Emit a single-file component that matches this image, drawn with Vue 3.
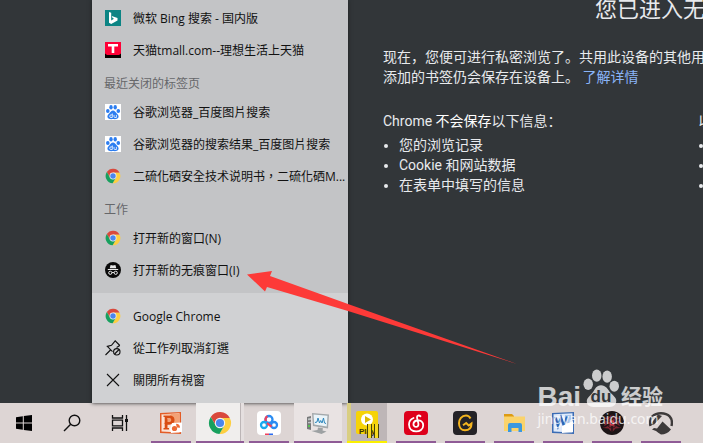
<template>
  <div class="desktop">
    <!-- 圖示 -->
    <svg class="sprite" aria-hidden="true">
      <symbol id="chrome" viewBox="0 0 24 24">
        <path fill="#d9493c" d="M12 12V7h9.8A11 11 0 0 0 2.77 6l4.9 8.5z" />
        <path fill="#fdcf41" d="M21.8 7H12v5l4.33 2.5-4.9 8.5A11 11 0 0 0 21.8 7z" />
        <path fill="#17a05e" d="M2.77 6l4.9 8.5L12 12l4.33 2.5-4.9 8.5A11 11 0 0 1 2.77 6z" />
        <circle cx="12" cy="12" r="5.2" fill="#f5f5f5" />
        <circle cx="12" cy="12" r="4.1" fill="#4a86ee" />
      </symbol>
      <symbol id="bing" viewBox="0 0 16 16">
        <path fill="#0c8484" d="M0 0h16v16H0z" />
        <path fill="#fff" d="M4 2l2.2.8v7.6l2.8-1.6-1.4-.7-.9-2.2 5.8 2v2.5L6.2 14 4 12.8z" />
      </symbol>
      <symbol id="tmall" viewBox="0 0 16 16">
        <path fill="#ff0036" d="M0 0h16v16H0z" />
        <path fill="#0b0000" d="M0 11.5l2 1.6h12l2-1.6V16H0z" />
        <path fill="#fff" d="M3 2h10v2.4H9.3V11H6.7V4.4H3z" />
      </symbol>
      <symbol id="baidu" viewBox="0 0 16 16">
        <path fill="#fff" d="M0 0h16v16H0z" />
        <g fill="#2c7df0">
          <ellipse cx="2.8" cy="7" rx="1.8" ry="2.1" />
          <ellipse cx="6" cy="3.2" rx="1.7" ry="2.2" />
          <ellipse cx="10.2" cy="3.2" rx="1.7" ry="2.2" />
          <ellipse cx="13.3" cy="7" rx="1.8" ry="2.1" />
          <path d="M8 6.6c1.7 0 2.4 1.6 3.6 2.7 1.4 1.2 2.4 2.500 1.800 4.200-.8 2-3.300 1.600-5.400 1.600s-4.600.4-5.400-1.600c-.6-1.700.4-3 1.800-4.200C5.600 8.200 6.300 6.600 8 6.600z" />
        </g>
        <path fill="none" stroke="#fff" stroke-width=".8" d="M7.300 9.500v4H6a1.300 1.300 0 0 1 0-2.600h1.300M9 10.900v1.600q0 1 1 1h1.400v-2.600" />
      </symbol>
      <symbol id="incognito" viewBox="0 0 16 16">
        <circle cx="8" cy="8" r="8" fill="#0a0a0a" />
        <path fill="#e8e8e8" d="M5.600 3l2.400.5 2.400-.5.9 3.300H4.700zM2.800 7h10.400v1H2.800z" />
        <path fill="none" stroke="#e8e8e8" d="M7 10.600q1-.6 2 0" />
        <circle cx="5.300" cy="10.800" r="1.600" fill="none" stroke="#e8e8e8" />
        <circle cx="10.700" cy="10.800" r="1.600" fill="none" stroke="#e8e8e8" />
      </symbol>
      <symbol id="unpin" viewBox="0 0 16 16">
        <g fill="none" stroke="#111" stroke-width="1.100">
          <path d="M.5 15l5-5M14.800 5.500L10.200.8 6.500 5.300 2.300 6.400l5.200 5.200M14.800 5.500l-3.200 2" />
          <circle cx="11.800" cy="11.800" r="3.200" />
          <path d="M9.600 14l4.500-4.500" />
        </g>
      </symbol>
      <symbol id="close" viewBox="0 0 16 16">
        <path fill="none" stroke="#111" stroke-width="1.100" d="M2 2l12 12M14 2L2 14" />
      </symbol>
      <symbol id="windows" viewBox="0 0 24 24">
        <path d="M4 6.300l6.800-1v6.200H4zM11.800 5.100L20 4v7.500h-8.200zM4 12.500h6.800v6.200l-6.800-1zM11.800 12.500H20V20l-8.200-1.100z" />
      </symbol>
      <symbol id="search" viewBox="0 0 24 24">
        <g fill="none" stroke="#111" stroke-width="1.400">
          <circle cx="14.500" cy="9.500" r="5.300" />
          <path d="M10.700 13.300L4 20" />
        </g>
      </symbol>
      <symbol id="taskview" viewBox="0 0 24 24">
        <path fill="none" stroke="#111" stroke-width="1.300" d="M4.500 4v3h10V4M4.500 20v-3h10v3M4.500 9.200h10v5.600h-10zM18.500 4v16" />
        <path fill="#111" d="M17 8h3v3h-3z" />
      </symbol>
      <symbol id="powerpoint" viewBox="0 0 24 24">
        <path fill="#e35c26" d="M1 2l21-1v22L1 22z" />
        <path fill="#fbe3d6" d="M2.500 3.200l18-.9v19.200l-18-1z" />
        <path fill="#f3a276" d="M3 3.500l17.500-1V13H3z" />
        <path fill="#fbe3d6" d="M3 4l9-.5L3 15z" />
        <path fill="#d94d14" fill-rule="evenodd" d="M4.500 4.500H10c4 0 5.500 1.700 5.500 4.600 0 3.200-2.200 4.600-5.300 4.600H8.500V17H10v1.500H4.500V17H5.700V6H4.500zM8.500 7v4h1.300c1.700 0 2.400-.6 2.400-2s-.7-2-2.300-2z" />
        <path fill="#fff" d="M13 12l10-.5V21l-11 1-1-4z" />
        <circle cx="15.500" cy="17.500" r="2.600" fill="#ed6a35" />
        <path fill="#ed6a35" d="M17 12.800a4 4 0 0 1 4 4l-3.300-.4z" />
      </symbol>
      <symbol id="netdisk" viewBox="0 0 24 24">
        <rect width="24" height="24" rx="4" fill="#fff" />
        <g fill="none" stroke-width="2.300">
          <circle cx="12" cy="8.500" r="3.500" stroke="#2b8cf2" />
          <path stroke="#f2405c" d="M9 10.300a3.500 3.500 0 0 1 1.500-5" />
          <circle cx="7" cy="14" r="3" stroke="#19a9ef" />
          <circle cx="17" cy="14" r="3" stroke="#2b8cf2" />
          <path stroke="#f2405c" d="M10 12.200l4.500 3.500" />
        </g>
        <path fill="#f2405c" d="M8 22.500h4V24H8z" />
        <path fill="#2b6cf2" d="M12 22.500h4V24h-4z" />
      </symbol>
      <symbol id="monitor" viewBox="0 0 24 24">
        <path fill="#77797a" d="M1 6l4-1v14l-4-1z" />
        <path fill="#bfc3c4" d="M2 7.500l3-.5v2l-3 .3zM2 11l3-.3v1.500l-3 .1z" />
        <path fill="#54c451" d="M2 14h2v2H2z" />
        <path fill="#a3a8ab" d="M6 2l17 1.500-1 14L7 15z" />
        <path fill="#eaf4f9" d="M7.500 3.600l14 1.200-.8 10.800L8.300 13.600z" />
        <path fill="none" stroke="#2c86bd" d="M9 11.500l2-.5 1-4 1.500 5 1.200-2.500 1.300 2.500 1.500-5 1 5 1.500.5" />
        <path fill="#9da1a3" d="M12 16.500l5 .7-.5 2.300 4 1-5 2.500-10-3 6-1z" />
      </symbol>
      <symbol id="player" viewBox="0 0 24 24">
        <rect x="1" width="22" height="23" rx="2" fill="#f6d307" />
        <circle cx="12" cy="8.500" r="6" fill="#fff" />
        <path fill="#dcb900" d="M10 5l6 3.500-6 3.500z" />
      </symbol>
      <symbol id="music" viewBox="0 0 24 24">
        <rect width="24" height="24" rx="4" fill="#de001b" />
        <path fill="none" stroke="#fff" stroke-width="1.800" stroke-linecap="round" d="M16.500 5.200c-1.500-1.300-3.700-.6-3.500 1.400l1.400 6c.4 2.200-1 3.300-2.300 3.300-3.600 0-3.700-5.600.7-6.400 4-.8 6.500 1.600 6.400 5 0 8-14.200 8.200-14.200-.9 0-3 1.800-5.600 4.500-6.600" />
      </symbol>
      <symbol id="gplayer" viewBox="0 0 24 24">
        <rect width="24" height="24" rx="4" fill="#242327" />
        <path fill="none" stroke="#f4b51f" stroke-width="2" d="M17.500 7.500C16.500 5.500 15.200 4.500 13 4.500c-4.300 0-7 3.500-7 7.800 0 4 2.300 7 6 7 4 0 6.500-2.500 6.500-6.800l-2.800 2-2.500-2.500-3.200 2.300" />
      </symbol>
      <symbol id="explorer" viewBox="0 0 24 24">
        <path fill="#dd9b13" d="M2 3h8l2 2v3H2z" />
        <path fill="#fad36b" d="M2 5.500h21V20H2z" />
        <path fill="#3a98df" d="M8 12h10q2 0 2 2v7h-3.500v-4h-7v4H6v-7q0-2 2-2z" />
      </symbol>
      <symbol id="word" viewBox="0 0 24 24">
        <path fill="#3a6cb5" d="M1 2l22-1v22L1 22z" />
        <path fill="#dfeafa" d="M2.500 3.300l19-1v19.200l-19-1z" />
        <path fill="#a9c7ed" d="M14 4h6v8h-6z" />
        <path fill="none" stroke="#2e65b5" stroke-width="2.400" d="M4.500 6l2.500 9 3-8.500L13 15l3-9.500" />
        <path fill="#fff" d="M11 15l11-5v11l-11 1z" />
      </symbol>
      <symbol id="emblem" viewBox="0 0 24 24">
        <circle cx="12" cy="12" r="12" fill="#1c1516" />
        <path fill="#7d2530" d="M12 3l3 3 5 1-1 5 1.500 5-5 .5-3.500 4-3.500-4-5-.5L5 12 4 7l5-1z" />
        <path fill="none" stroke="#1c1516" stroke-width="1.500" d="M12 2v20M4 8l16 8M20 8L4 16" />
        <circle cx="12" cy="12" r="5" fill="none" stroke="#311519" />
        <circle cx="12" cy="12" r="2.700" fill="#d6444f" />
        <circle cx="12" cy="12" r="1.200" fill="#2a1113" />
      </symbol>
      <symbol id="mountain" viewBox="0 0 24 24">
        <path fill="none" stroke="#3d3a3a" stroke-width="2.400" d="M1.500 15C-.5 6.500 5 2.200 12 2.200S24.500 6.500 22.500 15" />
        <path fill="#3d3a3a" d="M1 14L9 3.500l4 1.500-8 8.500z" />
        <path fill="#3d3a3a" d="M3 18.500l2-1.500 3 .5 5.500-7L22 18.500q-4 5-10 5-3-2-5-3.500z" />
      </symbol>
    </svg>

    <main class="page">
      <div class="incognito">
        <h1>您已进入无痕模式</h1>
        <p class="intro">
          现在，您便可进行私密浏览了。共用此设备的其他用<br />
          添加的书签仍会保存在设备上。 <a href="#">了解详情</a>
        </p>
        <div class="columns">
          <section>
            <h2>Chrome <em>不会保存</em>以下信息：</h2>
            <ul>
              <li v-for="text in notSaved" :key="text">{{ text }}</li>
            </ul>
          </section>
          <section>
            <h2>以</h2>
            <ul>
              <li v-for="n in 3" :key="n"></li>
            </ul>
          </section>
        </div>
      </div>

      <nav class="jump-list" lang="zh-TW">
        <div class="recent">
          <template v-for="group in groups" :key="group.title">
            <h3 v-if="group.title">{{ group.title }}</h3>
            <button v-for="item in group.items" :key="item.text" class="item" type="button">
              <svg><use :href="'#' + item.icon" /></svg>
              <span>{{ item.text }}</span>
            </button>
          </template>
        </div>
        <div class="system">
          <button v-for="item in systemItems" :key="item.text" class="item" type="button">
            <svg><use :href="'#' + item.icon" /></svg>
            <span>{{ item.text }}</span>
          </button>
        </div>
      </nav>
    </main>

    <footer class="taskbar">
      <div class="tools">
        <button v-for="tool in tools" :key="tool.icon" type="button" :aria-label="tool.label">
          <svg><use :href="'#' + tool.icon" /></svg>
        </button>
      </div>
      <div class="apps">
        <button
          v-for="app in apps"
          :key="app.icon"
          type="button"
          :class="['app', app.state]"
          :aria-label="app.label"
        >
          <svg><use :href="'#' + app.icon" /></svg>
          <template v-if="app.state === 'alert'">
            <span class="caption">Play</span>
            <span class="pause"></span>
          </template>
        </button>
      </div>
    </footer>

    <svg class="arrow" viewBox="0 0 270 93" aria-hidden="true">
      <path fill="#fd3a38" d="M0 3.500L25 0l-2 5 78 28 169 60-169-53-81-24-2 4.500z" />
    </svg>

    <div class="watermark">
      <div class="brand">
        <span class="bai">Bai</span>
        <span class="paw">
          <svg viewBox="0 0 38 41" aria-hidden="true">
            <ellipse cx="5.500" cy="16" rx="5" ry="6" />
            <ellipse cx="14.500" cy="7" rx="5" ry="6.500" />
            <ellipse cx="25.500" cy="8" rx="5" ry="6.500" />
            <ellipse cx="33" cy="18" rx="5" ry="5.800" />
            <path d="M19 17c5 0 7 4 10 8 4 4 7 6 6 10-1 5-6 5-10 5H13c-5 0-9-1-9-6 0-4 4-6 6-9 3-4 4-8 9-8z" />
          </svg>
          <span class="du">du</span>
        </span>
        <span class="jingyan">经验</span>
      </div>
      <div class="site">jingyan.baidu.com</div>
    </div>
  </div>
</template>

<script setup>
const notSaved = ["您的浏览记录", "Cookie 和网站数据", "在表单中填写的信息"];

// 跳躍清單
const groups = [
  {
    title: "",
    items: [
      { icon: "bing", text: "微软 Bing 搜索 - 国内版" },
      { icon: "tmall", text: "天猫tmall.com--理想生活上天猫" },
    ],
  },
  {
    title: "最近关闭的标签页",
    items: [
      { icon: "baidu", text: "谷歌浏览器_百度图片搜索" },
      { icon: "baidu", text: "谷歌浏览器的搜索结果_百度图片搜索" },
      { icon: "chrome", text: "二硫化硒安全技术说明书，二硫化硒M..." },
    ],
  },
  {
    title: "工作",
    items: [
      { icon: "chrome", text: "打开新的窗口(N)" },
      { icon: "incognito", text: "打开新的无痕窗口(I)" },
    ],
  },
];

const systemItems = [
  { icon: "chrome", text: "Google Chrome" },
  { icon: "unpin", text: "從工作列取消釘選" },
  { icon: "close", text: "關閉所有視窗" },
];

// 工作列
const tools = [
  { icon: "windows", label: "開始" },
  { icon: "search", label: "搜尋" },
  { icon: "taskview", label: "工作檢視" },
];

const apps = [
  { icon: "powerpoint", label: "PowerPoint" },
  { icon: "chrome", label: "Google Chrome", state: "active" },
  { icon: "netdisk", label: "百度网盘" },
  { icon: "monitor", label: "效能監視器", state: "open" },
  { icon: "player", label: "Player", state: "alert" },
  { icon: "music", label: "音乐" },
  { icon: "gplayer", label: "G" },
  { icon: "explorer", label: "檔案總管" },
  { icon: "word", label: "Word" },
  { icon: "emblem", label: "Emblem" },
  { icon: "mountain", label: "Mountain" },
];
</script>

<style>
body {
  margin: 0;
  overflow: hidden;
}
</style>

<style scoped>
.desktop {
  position: relative;
  display: flex;
  flex-direction: column;
  min-height: 100vh;
  overflow: hidden;
  background: #323639;
  font-family: Roboto, "Noto Sans CJK SC", sans-serif;
}

.sprite {
  position: absolute;
  width: 0;
  height: 0;
}

button {
  border: 0;
  padding: 0;
  background: none;
  font: inherit;
  color: inherit;
}

/* 無痕頁面 */
.page {
  flex: 1;
  position: relative;
  padding-left: 383px;
  color: #e8eaed;
  font-size: 14px;
  line-height: 20px;
}

.incognito {
  width: 600px;
}

h1 {
  margin: 0 0 27px;
  font-size: 22px;
  font-weight: 400;
  line-height: 20px;
  text-align: center;
}

.intro {
  margin: 0 0 24px;
  white-space: nowrap;
}

.intro a {
  color: #8ab4f8;
  text-decoration: none;
}

.columns {
  display: grid;
  grid-template-columns: 1fr 1fr;
  column-gap: 30px;
}

h2 {
  margin: 0 0 4px;
  font-size: 14px;
  font-weight: 400;
  line-height: 20px;
}

h2 em {
  color: #fff;
  font-style: normal;
}

.columns ul {
  margin: 0;
  padding-left: 16px;
}

.columns li {
  min-height: 20px;
}

/* 右鍵選單 */
.jump-list {
  position: absolute;
  bottom: 0;
  left: 92px;
  width: 256px;
  color: #111;
  font-family: "Open Sans", "Noto Sans CJK TC", sans-serif;
  font-size: 12px;
  box-shadow: 0 0 4px #1b1d1f;
}

.recent {
  padding: 2px 0 7px;
  background: #c3c4c6;
}

.system {
  padding: 7px 0;
  background: #d0d1d3;
}

.jump-list h3 {
  margin: 0;
  padding: 8px 12px 2px;
  color: #66676a;
  font-size: 12px;
  font-weight: 400;
  line-height: 20px;
}

.item {
  display: flex;
  align-items: center;
  gap: 12px;
  width: 100%;
  height: 32px;
  padding-left: 13px;
  text-align: left;
  white-space: nowrap;
}

.item svg {
  flex: none;
  width: 16px;
  height: 16px;
}

.item span {
  padding-top: 2px;
}

/* 工作列 */
.taskbar {
  display: flex;
  gap: 3px;
  height: 40px;
  background: #ddd5d4;
}

.tools {
  display: flex;
}

.tools button {
  display: grid;
  place-items: center;
  width: 48px;
  height: 40px;
}

.apps {
  display: flex;
  gap: 1px;
}

.taskbar svg {
  width: 24px;
  height: 24px;
}

.app {
  position: relative;
  display: grid;
  place-items: center;
  width: 48px;
  height: 40px;
  background: linear-gradient(#8f5b96, #8f5b96) bottom / 40px 2px no-repeat;
}

.app.active {
  background:
    linear-gradient(#8f5b96, #8f5b96) bottom / 100% 2px no-repeat,
    linear-gradient(to right, #f0eeed 44px, #bcb5b6 44px, #bcb5b6 45px, #e5dfdf 45px);
}

.app.open {
  background: linear-gradient(#8f5b96, #8f5b96) bottom / 100% 2px no-repeat #e9e3e3;
}

.app.alert {
  width: 40px;
  margin: 0 4px;
  background:
    linear-gradient(#fbf000, #fbf000) bottom / 100% 2px no-repeat,
    linear-gradient(to right, #d9ce82 4px, #beb6b7 4px);
}

.caption {
  position: absolute;
  bottom: 7px;
  left: 12px;
  color: #3b3508;
  font-family: "Liberation Sans", sans-serif;
  font-size: 8px;
  font-weight: 700;
  line-height: 8px;
}

.pause {
  position: absolute;
  right: 8px;
  bottom: 5px;
  box-sizing: border-box;
  width: 12px;
  height: 14px;
  border: solid #4a430a;
  border-width: 0 1px;
  background: linear-gradient(to right, #f7da1f 3px, #4a430a 3px, #4a430a 4px, transparent 4px, transparent 6px, #4a430a 6px, #4a430a 7px, #f7da1f 7px);
}

/* 紅色箭頭 */
.arrow {
  position: absolute;
  left: 247px;
  bottom: 79px;
  width: 270px;
  height: 93px;
}

/* 浮水印 */
.watermark {
  position: absolute;
  right: 40px;
  bottom: 14px;
  color: #fff;
  opacity: 0.75;
  white-space: nowrap;
}

.brand {
  display: flex;
  align-items: flex-end;
  gap: 2px;
  font-weight: 700;
  line-height: 24px;
}

.bai {
  font-family: "Liberation Sans", sans-serif;
  font-size: 28px;
}

.paw {
  position: relative;
  width: 36px;
  height: 41px;
}

.paw svg {
  display: block;
  width: 36px;
  height: 41px;
  fill: #fff;
}

.du {
  position: absolute;
  inset: auto 0 2px;
  color: #323639;
  font-family: "Liberation Sans", sans-serif;
  font-size: 17px;
  line-height: 20px;
  text-align: center;
}

.jingyan {
  font-size: 21px;
}

.site {
  font-family: "Noto Sans", sans-serif;
  font-size: 14px;
  line-height: 20px;
}
</style>
